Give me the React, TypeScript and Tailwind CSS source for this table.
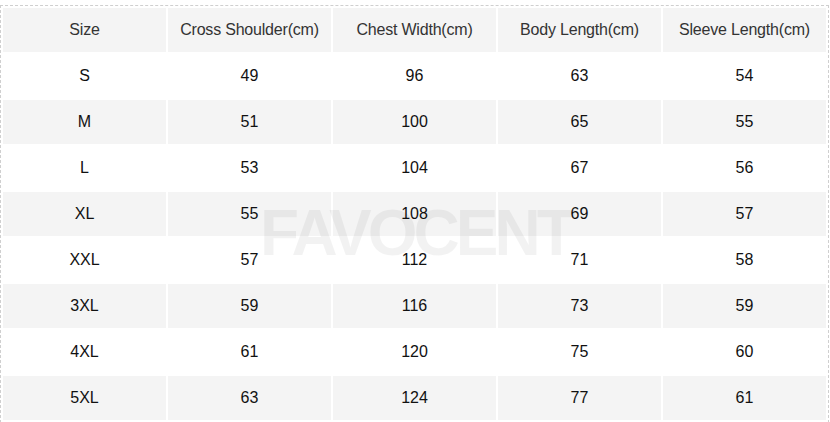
import React from "react";

const header = ["Size", "Cross Shoulder(cm)", "Chest Width(cm)", "Body Length(cm)", "Sleeve Length(cm)"];
const rows = [
  ["S", "49", "96", "63", "54"],
  ["M", "51", "100", "65", "55"],
  ["L", "53", "104", "67", "56"],
  ["XL", "55", "108", "69", "57"],
  ["XXL", "57", "112", "71", "58"],
  ["3XL", "59", "116", "73", "59"],
  ["4XL", "61", "120", "75", "60"],
  ["5XL", "63", "124", "77", "61"],
];

export default function App() {
  return (
    <div
      className="relative w-[830px] h-[422px] bg-white pt-[5px] pl-0 overflow-hidden"
      style={{ fontFamily: '"Liberation Sans", Arial, sans-serif' }}
    >
      <table className="table-fixed border-separate border-spacing-[2px] border border-dashed border-[#cfcfcf] text-[16px]">
        <colgroup>
          {header.map((h) => (
            <col key={h} className="w-[163px]" />
          ))}
        </colgroup>
        <thead>
          <tr>
            {header.map((h) => (
              <th key={h} className="h-[44px] bg-[#f4f4f4] font-normal text-[#333] text-center p-0 tracking-[-0.2px]">
                {h}
              </th>
            ))}
          </tr>
        </thead>
        <tbody>
          {rows.map((r, i) => (
            <tr key={r[0]}>
              {r.map((c, j) => (
                <td
                  key={j}
                  className={
                    "h-[44px] text-center p-0 text-[#111] " + (i % 2 === 1 ? "bg-[#f4f4f4]" : "bg-white")
                  }
                >
                  {c}
                </td>
              ))}
            </tr>
          ))}
        </tbody>
      </table>
      <div className="pointer-events-none absolute left-[260px] top-[201px] w-[304px] text-center text-[64px] font-bold leading-none tracking-[-4px] text-[rgba(0,0,0,0.05)]">
        FAVOCENT
      </div>
    </div>
  );
}
